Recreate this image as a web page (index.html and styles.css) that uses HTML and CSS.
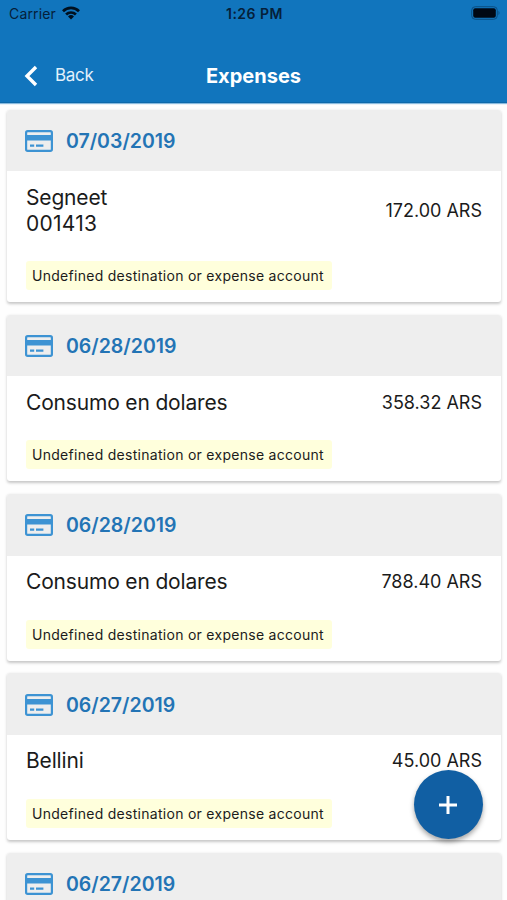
FILE: index.html
```
<!DOCTYPE html>
<html lang="en">
<head>
<meta charset="utf-8">
<title>Expenses</title>
<link rel="stylesheet" href="styles.css">
</head>
<body>
<svg class="defs" aria-hidden="true">
  <symbol id="card-icon" viewBox="0 0 28 22">
    <rect x="1.1" y="1.1" width="25.8" height="19.8" rx="1.6" fill="none" stroke="currentColor" stroke-width="2.2"/>
    <path d="M1 5h26v5.6H1z" fill="currentColor"/>
    <path d="M5 15.6h4.2M11 15.6h7.4" fill="none" stroke="currentColor" stroke-width="2.4"/>
  </symbol>
</svg>
<div class="screen">
  <header class="top">
    <div class="status">
      <div class="carrier"><span>Carrier</span>
        <svg class="wifi" viewBox="0 0 18 14"><g fill="none" stroke="currentColor" stroke-width="2.7"><path d="M1 5.2a11.4 11.4 0 0 1 16 0"/><path d="M4.1 8.5a7 7 0 0 1 9.8 0"/></g><path d="M9 13.4 6 10.5a4.3 4.3 0 0 1 6 0z" fill="currentColor"/></svg>
      </div>
      <div class="time">1:26 PM</div>
      <svg class="battery" viewBox="0 0 30 14"><rect x=".7" y=".7" width="25.6" height="12.6" rx="3.6" fill="none" stroke="#0b4f83" stroke-width="1"/><rect x="2.2" y="2.2" width="22.6" height="9.6" rx="2" fill="#000814"/><path d="M27.5 4.8q2 2.2 0 4.4z" fill="#0b4f83"/></svg>
    </div>
    <nav class="nav">
      <div class="back"><svg class="chevron" viewBox="0 0 14 22"><path d="M12 2 3 11l9 9" fill="none" stroke="currentColor" stroke-width="3.4"/></svg><span>Back</span></div>
      <h1 class="heading">Expenses</h1>
    </nav>
  </header>
  <main class="list">
    <article class="card">
      <div class="card-head"><svg class="icon"><use href="#card-icon"/></svg><span class="date">07/03/2019</span></div>
      <div class="card-body"><div class="row"><div class="name">Segneet<br><span class="digits">001413</span></div><div class="amount">172.00 ARS</div></div><div class="badge">Undefined destination or expense account</div></div>
    </article>
    <article class="card">
      <div class="card-head"><svg class="icon"><use href="#card-icon"/></svg><span class="date">06/28/2019</span></div>
      <div class="card-body"><div class="row"><div class="name">Consumo en dolares</div><div class="amount">358.32 ARS</div></div><div class="badge">Undefined destination or expense account</div></div>
    </article>
    <article class="card">
      <div class="card-head"><svg class="icon"><use href="#card-icon"/></svg><span class="date">06/28/2019</span></div>
      <div class="card-body"><div class="row"><div class="name">Consumo en dolares</div><div class="amount">788.40 ARS</div></div><div class="badge">Undefined destination or expense account</div></div>
    </article>
    <article class="card">
      <div class="card-head"><svg class="icon"><use href="#card-icon"/></svg><span class="date">06/27/2019</span></div>
      <div class="card-body"><div class="row"><div class="name">Bellini</div><div class="amount">45.00 ARS</div></div><div class="badge">Undefined destination or expense account</div></div>
    </article>
    <article class="card">
      <div class="card-head"><svg class="icon"><use href="#card-icon"/></svg><span class="date">06/27/2019</span></div>
      <div class="card-body"></div>
    </article>
  </main>
  <button class="fab" aria-label="Add expense"><svg viewBox="0 0 18 18"><path d="M9 0v18M0 9h18" stroke="currentColor" stroke-width="3"/></svg></button>
</div>
</body>
</html>
```
FILE: styles.css
```
* { box-sizing: border-box; }
body { margin: 0; background: #fff; font-family: Inter, "Liberation Sans", sans-serif; color: #1b1b1b; }
.defs { position: absolute; width: 0; height: 0; }
.screen { position: relative; height: 900px; overflow: hidden; display: flex; flex-direction: column; background: #fefefe; }
.top { flex: none; height: 103px; background: #1175bd; box-shadow: 0 1px 1px rgba(17, 117, 189, .5); border-bottom: 1px solid #0e69aa; }
.status { height: 26px; display: grid; grid-template-columns: 1fr auto 1fr; align-items: center; padding: 0 6px 0 9px; color: #05203a; font-size: 14px; }
.carrier { display: flex; align-items: center; gap: 6px; letter-spacing: .15px; }
.wifi { width: 18px; height: 14px; color: #00101f; }
.time { font-weight: 600; font-size: 14px; letter-spacing: .5px; margin-left: -1px; }
.battery { width: 30px; height: 14px; justify-self: end; }
.nav { height: 77px; display: grid; grid-template-columns: 1fr auto 1fr; align-items: center; padding: 22px 24px 0; color: #fff; }
.back { display: flex; align-items: center; gap: 17px; font-size: 17px; letter-spacing: -.3px; color: #e2f1fb; }
.back span { margin-top: -2px; }
.chevron { width: 14px; height: 22px; color: #fff; }
.heading { margin: 0; font-size: 20px; font-weight: 700; }
.list { padding: 6.5px 6px 0 7px; display: flex; flex-direction: column; gap: 12.6px; }
.card { flex: none; background: #fff; border-radius: 3px; box-shadow: 0 1.5px 3px rgba(0, 0, 0, .22); overflow: hidden; }
.card-head { height: 61.5px; background: #eee; display: flex; align-items: center; gap: 13px; padding: 1px 18px 0; }
.icon { width: 28px; height: 22px; color: #3d93d3; }
.date { font-size: 19.5px; font-weight: 600; color: #2374b5; }
.card-body { padding: 13.7px 19px 12.2px; }
.row { display: flex; align-items: center; justify-content: space-between; margin-bottom: 24.3px; }
.name { font-size: 21px; line-height: 26px; letter-spacing: -.17px; }
.digits { letter-spacing: .25px; }
.amount { font-size: 18px; line-height: 26px; }
.badge { width: 306px; height: 29px; line-height: 29px; padding-left: 6px; border-radius: 3px; background: #ffffdc; font-size: 14px; letter-spacing: .28px; white-space: nowrap; }
.fab { position: absolute; right: 24px; bottom: 61px; width: 69px; height: 69px; padding: 0 1px 0 0; border: 0; border-radius: 50%; background: #115fa3; color: #fff; display: flex; align-items: center; justify-content: center; box-shadow: 0 3px 5px rgba(0, 0, 0, .35); }
.fab svg { width: 18px; height: 18px; }
```
